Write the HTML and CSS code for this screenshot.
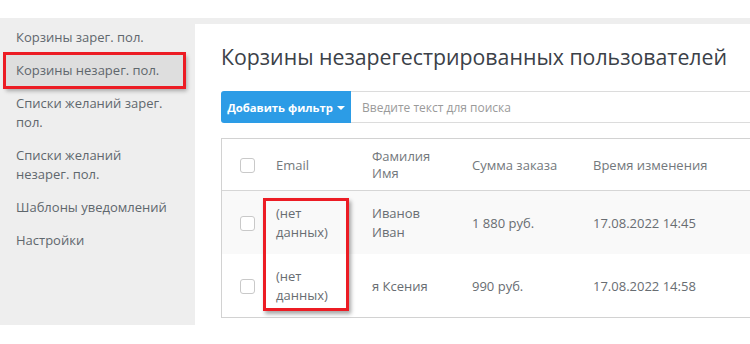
FILE: index.html
```html
<!DOCTYPE html>
<html lang="ru">
<head>
    <meta charset="UTF-8">
    <title>Корзины незарегестрированных пользователей</title>
    <link rel="stylesheet" href="styles.css">
</head>
<body>
    <div class="topbar"></div>

    <div class="layout">
        <!-- Меню слева -->
        <ul class="menu">
            <li class="menu-item">Корзины зарег. пол.</li>
            <li class="menu-item selected">Корзины незарег. пол.</li>
            <li class="menu-item">Списки желаний зарег.<br>пол.</li>
            <li class="menu-item">Списки желаний<br>незарег. пол.</li>
            <li class="menu-item">Шаблоны уведомлений</li>
            <li class="menu-item">Настройки</li>
        </ul>

        <!-- Основная часть -->
        <div class="content">
            <h1 class="title">Корзины незарегестрированных пользователей</h1>

            <div class="filter">
                <button class="filter-btn">Добавить фильтр <span class="caret"></span></button>
                <input class="search" type="text" placeholder="Введите текст для поиска">
            </div>

            <div class="table-wrap">
                <table class="grid">
                    <colgroup>
                        <col style="width: 42px">
                        <col style="width: 96px">
                        <col style="width: 100px">
                        <col style="width: 121px">
                        <col>
                    </colgroup>
                    <thead>
                        <tr>
                            <th><span class="check"></span></th>
                            <th>Email</th>
                            <th>Фамилия<br>Имя</th>
                            <th>Сумма заказа</th>
                            <th>Время изменения</th>
                        </tr>
                    </thead>
                    <tbody>
                        <tr class="odd">
                            <td><span class="check"></span></td>
                            <td>(нет<br>данных)</td>
                            <td>Иванов<br>Иван</td>
                            <td>1 880 руб.</td>
                            <td>17.08.2022 14:45</td>
                        </tr>
                        <tr>
                            <td><span class="check"></span></td>
                            <td>(нет<br>данных)</td>
                            <td>я Ксения</td>
                            <td>990 руб.</td>
                            <td>17.08.2022 14:58</td>
                        </tr>
                    </tbody>
                </table>
                <!-- выделение колонки Email -->
                <div class="mark"></div>
            </div>
        </div>
    </div>
</body>
</html>
```

FILE: styles.css
```css
body {
    margin: 0;
    font-family: "Open Sans", "Liberation Sans", sans-serif;
    background-color: #ffffff;
    overflow: hidden;
}

.topbar {
    height: 18px;
}

.layout {
    display: flex;
    height: 307px;
    background-color: #eeeeee;
}

/* Меню */
.menu {
    list-style: none;
    width: 195px;
    margin: 0;
    padding: 4px 0 0 0;
    display: flex;
    flex-direction: column;
    gap: 2px;
    flex-shrink: 0;
}

.menu-item {
    margin: 0 12px 0 6px;
    padding: 6px 10px;
    font-size: 13px;
    line-height: 19px;
    color: #5f676d;
}

.menu-item.selected {
    background-color: #dedede;
    box-shadow: 0 0 0 3px #ec1c24, 2px 3px 4px 2px rgba(0, 0, 0, 0.3);
}

/* Контент */
.content {
    flex: 1;
    margin-top: 6px;
    margin-right: -20px;
    background-color: #ffffff;
    padding: 19px 0 0 26px;
    min-width: 0;
}

.title {
    margin: 0 0 20px 0;
    font-size: 21.3px;
    line-height: 28px;
    font-weight: 400;
    color: #3b4148;
    white-space: nowrap;
}

.filter {
    display: flex;
    height: 32px;
    margin-bottom: 15px;
}

.filter-btn {
    width: 130px;
    flex-shrink: 0;
    border: none;
    border-radius: 3px 0 0 3px;
    background-color: #2c9ce6;
    color: #ffffff;
    font-family: inherit;
    font-size: 11.3px;
    font-weight: 700;
    padding: 0;
    white-space: nowrap;
}

.caret {
    display: inline-block;
    margin-left: 1px;
    vertical-align: 2px;
    border-left: 4px solid transparent;
    border-right: 4px solid transparent;
    border-top: 4px solid #ffffff;
}

.search {
    flex: 1;
    border: 1px solid #dcdcdc;
    border-left: none;
    padding: 0 11px;
    font-family: inherit;
    font-size: 12px;
    color: #555;
    outline: none;
}

.search::placeholder {
    color: #9a9a9a;
}

/* Таблица */
.table-wrap {
    position: relative;
    border: 1px solid #d2d2d2;
}

.grid {
    width: 100%;
    border-collapse: collapse;
    table-layout: fixed;
    font-size: 13px;
    color: #686d72;
}

.grid th {
    text-align: left;
    font-weight: 400;
    line-height: 17px;
    padding: 9px 12px 8px 12px;
    color: #73787c;
    border-bottom: 1px solid #d6d6d6;
}

.grid td {
    line-height: 19px;
    padding: 13px 12px 12px 12px;
}

.grid th:first-child,
.grid td:first-child {
    padding-left: 18px;
    padding-right: 0;
}

.grid tr.odd td {
    background-color: #f9f9f9;
}

.check {
    display: block;
    width: 13px;
    height: 13px;
    border: 1px solid #c9c9c9;
    border-radius: 3px;
    background-color: #ffffff;
}

.mark {
    position: absolute;
    left: 41px;
    top: 59px;
    width: 80px;
    height: 107px;
    border: 3px solid #ec1c24;
    box-shadow: 2px 3px 4px rgba(0, 0, 0, 0.35);
}
```
